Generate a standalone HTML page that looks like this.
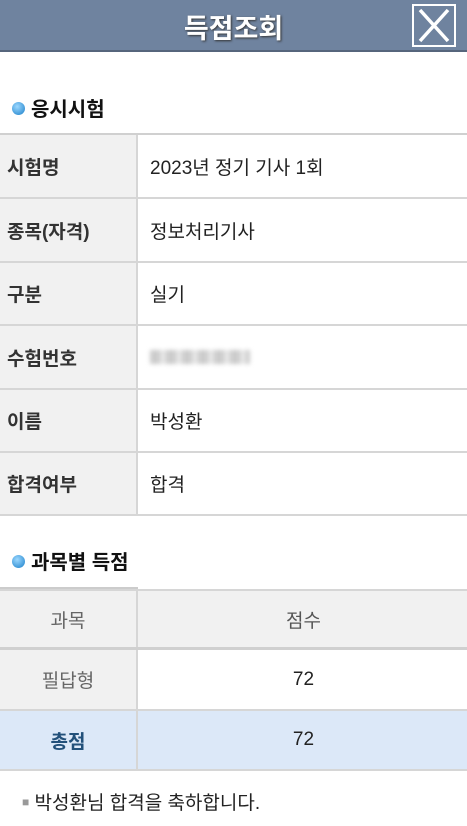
<!DOCTYPE html>
<html><head><meta charset="utf-8"><style>
*{margin:0;padding:0;box-sizing:border-box}
body{width:467px;height:826px;background:#fff;font-family:"Liberation Sans","Noto Sans CJK KR",sans-serif;position:relative;overflow:hidden;color:#222}
.hdr{position:absolute;left:0;top:0;width:467px;height:52px;background:#6f839f;border-bottom:2px solid #56657c}
.hdr .t{position:absolute;left:0;right:0;top:7px;text-align:center;color:#fff;font-size:27px;font-weight:bold;text-shadow:1px 1px 2px #333}
.x{position:absolute;left:412px;top:4px;width:44px;height:43px;border:2px solid #fff}
.sec{position:absolute;left:12px;font-size:20px;font-weight:bold;color:#111}
.sec:before{content:"";display:inline-block;width:13px;height:13px;border-radius:50%;background:radial-gradient(circle at 40% 35%,#9cd8ff,#1a7fc9);margin-right:6px;vertical-align:1px}
.row{position:absolute;left:0;width:467px;border-bottom:2px solid #d6d6d6}
.row .l{position:absolute;left:0;top:0;bottom:0;width:138px;background:#f1f1f1;border-right:2px solid #d6d6d6;font-weight:bold;font-size:19px;padding-left:7px;display:flex;align-items:center;color:#333}
.row .v{position:absolute;left:150px;top:0;bottom:0;font-size:19px;display:flex;align-items:center}
.c .l{justify-content:center;padding:0;font-weight:normal;color:#666}
.c .v{left:140px;right:0;justify-content:center;color:#222}
</style></head><body>
<div class="hdr"><div class="t">득점조회</div>
<div class="x"><svg width="40" height="39" viewBox="0 0 40 39"><path d="M6 4L34 35M34 4L6 35" stroke="#fff" stroke-width="3.5"/></svg></div></div>
<div class="sec" style="top:93px">응시시험</div>
<div style="position:absolute;left:0;top:133px;width:467px;border-top:2px solid #d0d0d0"></div>
<div class="row" style="top:135px;height:64px"><div class="l">시험명</div><div class="v">2023년 정기 기사 1회</div></div>
<div class="row" style="top:199px;height:64px"><div class="l">종목(자격)</div><div class="v">정보처리기사</div></div>
<div class="row" style="top:263px;height:63px"><div class="l">구분</div><div class="v">실기</div></div>
<div class="row" style="top:326px;height:64px"><div class="l">수험번호</div><div class="v"><span style="display:inline-block;width:100px;height:14px;background:repeating-linear-gradient(90deg,#ccc 0 10px,#e6e6e6 10px 16px);filter:blur(2px)"></span></div></div>
<div class="row" style="top:390px;height:63px"><div class="l">이름</div><div class="v">박성환</div></div>
<div class="row" style="top:453px;height:63px"><div class="l">합격여부</div><div class="v">합격</div></div>
<div class="sec" style="top:546px">과목별 득점</div>
<div style="position:absolute;left:0;top:587px;width:138px;border-top:3px solid #ccc"></div>
<div class="row c" style="top:589px;height:61px;background:#f1f1f1;border-top:2px solid #d6d6d6;border-bottom:3px solid #d0d0d0"><div class="l">과목</div><div class="v" style="color:#555">점수</div></div>
<div class="row c" style="top:650px;height:61px"><div class="l">필답형</div><div class="v">72</div></div>
<div class="row c" style="top:711px;height:60px;background:#dce8f8"><div class="l" style="background:#dce8f8;color:#22507a;font-weight:bold">총점</div><div class="v">72</div></div>
<div style="position:absolute;left:22px;top:788px;font-size:19px;color:#222"><span style="color:#999;font-size:12px;vertical-align:3px">■</span> 박성환님 합격을 축하합니다.</div>
</body></html>
